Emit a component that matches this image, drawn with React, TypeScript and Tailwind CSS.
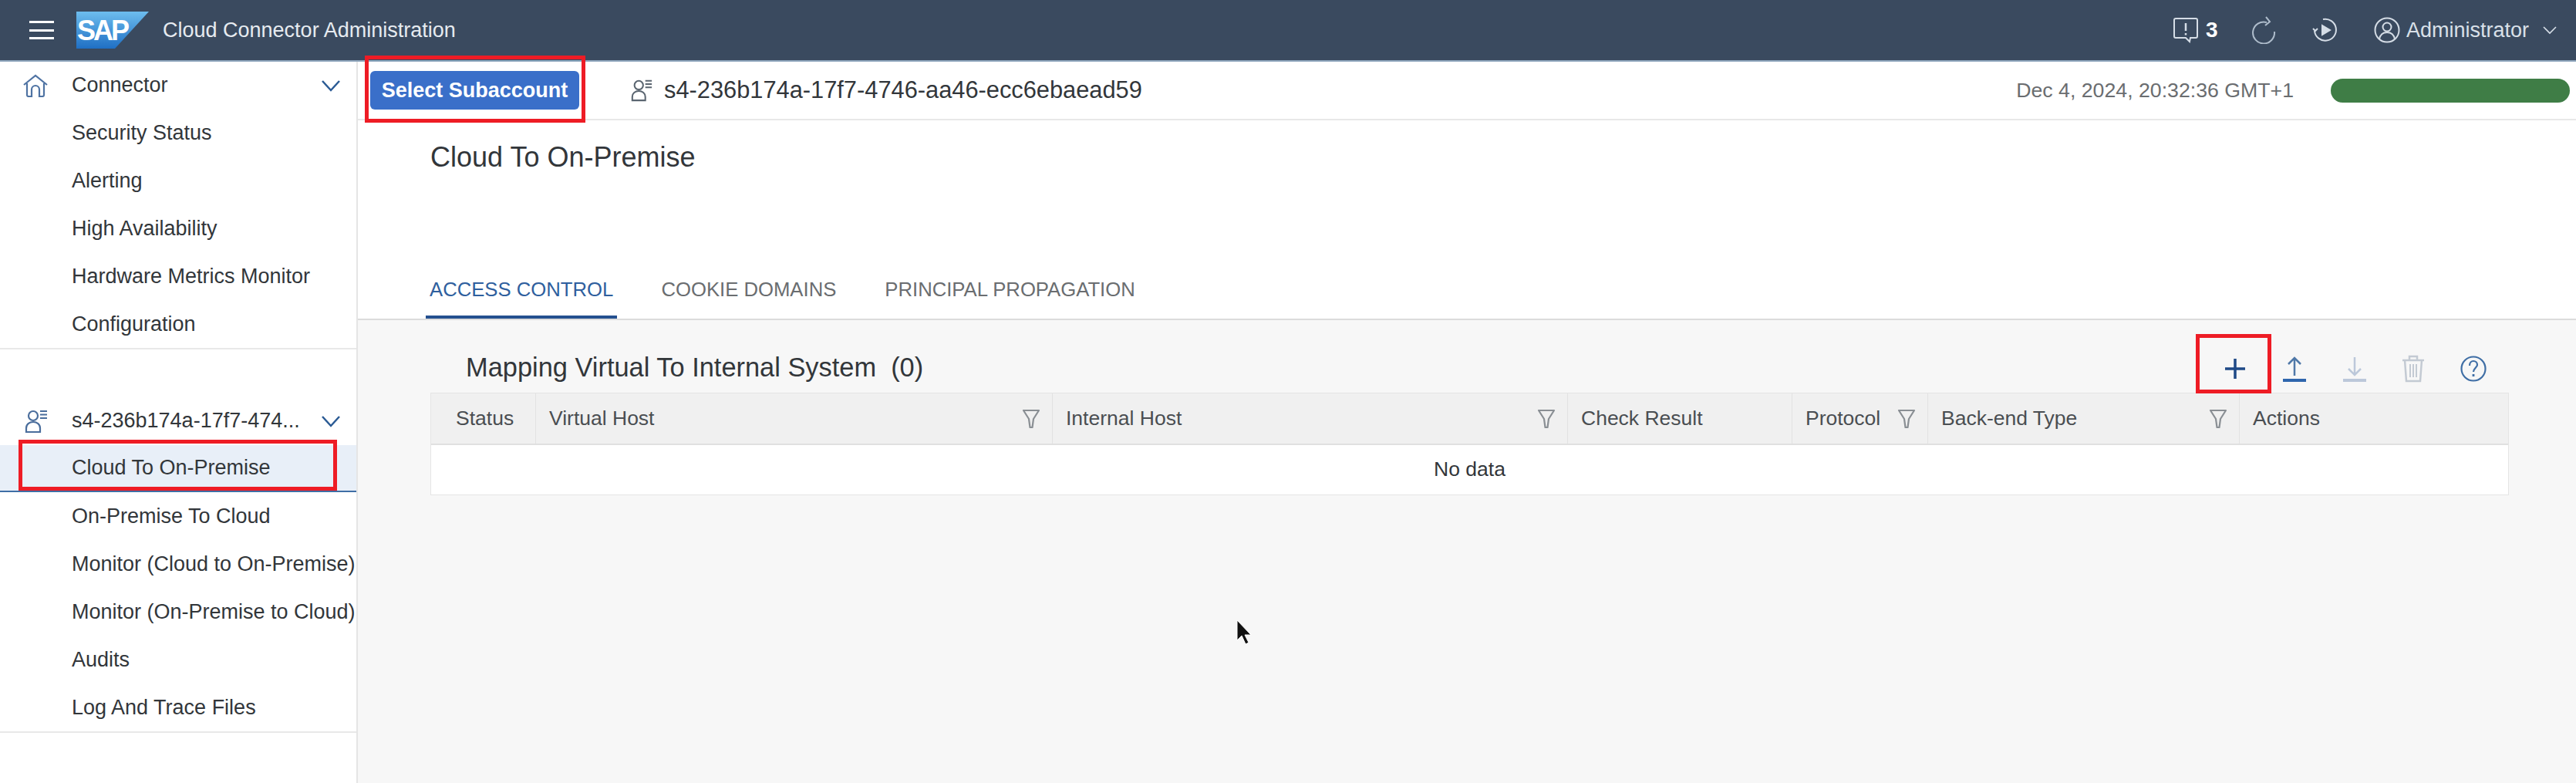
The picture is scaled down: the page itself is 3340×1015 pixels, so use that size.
const connectorItems = ["Security Status", "Alerting", "High Availability", "Hardware Metrics Monitor", "Configuration"];
const accountItems = ["On-Premise To Cloud", "Monitor (Cloud to On-Premise)", "Monitor (On-Premise to Cloud)", "Audits", "Log And Trace Files"];

const columns = [
  { label: "Status", filter: false },
  { label: "Virtual Host", filter: true },
  { label: "Internal Host", filter: true },
  { label: "Check Result", filter: false },
  { label: "Protocol", filter: true },
  { label: "Back-end Type", filter: true },
  { label: "Actions", filter: false },
];

function FilterIcon() {
  return (
    <svg width="24" height="28" viewBox="0 0 24 28" fill="none" stroke="#8a8f94" strokeWidth="2.200" className="shrink-0">
      <path d="M2 3h20l-7 11-1.500 11h-3L9 14z" strokeLinejoin="round" />
    </svg>
  );
}

function PersonListIcon({ color, size }: { color: string; size: number }) {
  return (
    <svg width={size} height={size} viewBox="0 0 32 32" fill="none" stroke={color} strokeWidth="2.200">
      <circle cx="12" cy="9" r="6" />
      <path d="M3 30v-5c0-5 4-8 9-8s9 3 9 8v5z" />
      <path d="M21 3h9M21 7.500h9M21 12h9" />
    </svg>
  );
}

function HomeIcon() {
  return (
    <svg width="32" height="30" viewBox="0 0 32 30" fill="none" stroke="#4f73a3" strokeWidth="2.200" className="ml-[30px] shrink-0">
      <path d="M1 14L16 2l15 12" />
      <path d="M5 12v15a2 2 0 0 0 2 2h4V20a5 5 0 0 1 10 0v9h4a2 2 0 0 0 2-2V12" />
    </svg>
  );
}

function NavChevron() {
  return (
    <svg width="26" height="16" viewBox="0 0 26 16" fill="none" stroke="#2a5a94" strokeWidth="2.500" className="mr-[20px] ml-auto shrink-0">
      <path d="M2 2l11 12L24 2" />
    </svg>
  );
}

function SapLogo() {
  return (
    <svg width="94" height="48" viewBox="0 0 94 48" className="shrink-0">
      <defs>
        <linearGradient id="sapBlue" x1="0" y1="0" x2="0" y2="1">
          <stop offset="0" stopColor="#6dbdee" />
          <stop offset="1" stopColor="#1f6fc4" />
        </linearGradient>
      </defs>
      <polygon points="0,0 94,0 50,48 0,48" fill="url(#sapBlue)" />
      <text x="1" y="37" fill="#ffffff" fontFamily="Liberation Sans, sans-serif" fontWeight="700" fontSize="36" letterSpacing="-3">
        SAP
      </text>
    </svg>
  );
}

export default function App() {
  return (
    <div className="flex h-[1015px] w-[3340px] flex-col overflow-hidden bg-white font-['Liberation_Sans',sans-serif] text-[27px] text-[#32363a]">
      <header className="flex h-[80px] shrink-0 items-center border-b-2 border-[#8fa6bd] bg-[#3a4a5f] text-[#e6ebf0]">
        <div className="ml-[38px] flex h-[24px] w-[32px] flex-col justify-between">
          <span className="h-[3px] bg-white" />
          <span className="h-[3px] bg-white" />
          <span className="h-[3px] bg-white" />
        </div>
        <div className="ml-[29px]">
          <SapLogo />
        </div>
        <span className="ml-[18px]">Cloud Connector Administration</span>
        <div className="ml-auto flex items-center">
          <svg width="34" height="34" viewBox="0 0 34 34" fill="none" stroke="#d5dde6" strokeWidth="2">
            <path d="M4 2h26a2 2 0 0 1 2 2v21a2 2 0 0 1-2 2h-7l-1 5-5-5H4a2 2 0 0 1-2-2V4a2 2 0 0 1 2-2z" />
            <path d="M17 8v10M17 21v2.500" strokeWidth="2.500" />
          </svg>
          <span className="ml-[9px] w-[16px] text-[28px] font-bold text-white">3</span>
          <svg className="ml-[42px]" width="34" height="36" viewBox="0 0 34 36" fill="none" stroke="#aebccb" strokeWidth="2">
            <path d="M21 8A14 14 0 1 0 31 20" />
            <path d="M20 1l5 6-6 5" />
          </svg>
          <svg className="ml-[46px]" width="34" height="34" viewBox="0 0 34 34" fill="none" stroke="#d5dde6" strokeWidth="2">
            <path d="M14 3a14 14 0 1 1-11 15" />
            <path d="M1 15l3 3 3-3" />
            <path d="M13 11l10 6-10 6z" fill="#d5dde6" />
          </svg>
          <svg className="ml-[46px]" width="34" height="36" viewBox="0 0 34 36" fill="none" stroke="#d5dde6" strokeWidth="2">
            <circle cx="17" cy="18" r="15.500" />
            <circle cx="17" cy="14" r="5.500" />
            <path d="M7 30c1-6 5-9 10-9s9 3 10 9" />
          </svg>
          <span className="ml-[8px] text-[#d9e0e8]">Administrator</span>
          <svg className="mr-[25px] ml-[18px]" width="18" height="11" viewBox="0 0 18 11" fill="none" stroke="#d5dde6" strokeWidth="1.600">
            <path d="M1 1l8 8 8-8" />
          </svg>
        </div>
      </header>

      <div className="flex min-h-0 flex-1">
        <aside className="w-[464px] shrink-0 border-r-2 border-[#e5e5e5] bg-white">
          <div className="flex h-[61px] items-center">
            <HomeIcon />
            <span className="ml-[31px]">Connector</span>
            <NavChevron />
          </div>
          {connectorItems.map((item) => (
            <div key={item} className="flex h-[62px] items-center pl-[93px]">
              {item}
            </div>
          ))}
          <div className="h-[63px] border-t-2 border-[#e8e8e8]" />
          <div className="flex h-[63px] items-center">
            <span className="ml-[31px] w-[32px]">
              <PersonListIcon color="#4a6d9c" size={32} />
            </span>
            <span className="ml-[30px] whitespace-nowrap">s4-236b174a-17f7-474...</span>
            <NavChevron />
          </div>
          <div className="relative flex h-[61px] items-center border-b-2 border-[#3f6ea5] bg-[#e8eff8] pl-[93px]">
            Cloud To On-Premise
            <div className="absolute top-[-7px] left-[24px] h-[66px] w-[413px] border-[5px] border-[#ee1c25]" />
          </div>
          {accountItems.map((item) => (
            <div key={item} className="flex h-[62px] items-center whitespace-nowrap pl-[93px]">
              {item}
            </div>
          ))}
          <div className="border-t-2 border-[#e8e8e8]" />
        </aside>

        <main className="flex min-w-0 flex-1 flex-col">
          <div className="flex h-[76px] shrink-0 items-center border-b-2 border-[#e8e8e8] pl-[16px]">
            <div className="relative">
              <button className="flex h-[50px] w-[271px] items-center justify-center rounded-[6px] bg-[#3a6fc9] text-[27px] font-bold text-white">
                Select Subaccount
              </button>
              <div className="absolute top-[-20px] left-[-7px] h-[87px] w-[286px] border-[5px] border-[#ee1c25]" />
            </div>
            <span className="ml-[66px]">
              <PersonListIcon color="#5a6570" size={30} />
            </span>
            <span className="ml-[14px] text-[30.800px]">s4-236b174a-17f7-4746-aa46-ecc6ebaead59</span>
            <span className="ml-auto text-[26.700px] text-[#6a6d70]">Dec 4, 2024, 20:32:36 GMT+1</span>
            <span className="mr-[8px] ml-[48px] h-[31px] w-[310px] rounded-full bg-[#3f7d46]" />
          </div>

          <div className="flex h-[259px] shrink-0 flex-col bg-white">
            <h1 className="mt-[26px] ml-[94px] text-[36px] leading-[44px]">Cloud To On-Premise</h1>
            <div className="mt-auto flex h-[80px] items-stretch border-b-2 border-[#dcdcdc] pl-[88px] text-[25.700px] text-[#6a6d70]">
              <div className="flex items-center border-b-4 border-[#24508f] px-[5px] pt-[6px] text-[#2f5f9e]">ACCESS CONTROL</div>
              <div className="ml-[57px] flex items-center pt-[2px]">COOKIE DOMAINS</div>
              <div className="ml-[63px] flex items-center pt-[2px]">PRINCIPAL PROPAGATION</div>
            </div>
          </div>

          <section className="relative flex-1 bg-[#f7f7f7] pr-[87px] pl-[94px]">
            <div className="flex h-[94px] items-end pb-[13px]">
              <h2 className="ml-[46px] text-[34.400px] leading-[40px]">Mapping Virtual To Internal System&nbsp;&nbsp;(0)</h2>
              <div className="ml-auto flex items-center">
                <div className="relative">
                  <svg width="32" height="32" viewBox="0 0 32 32" fill="none" stroke="#1f4a87" strokeWidth="3.500">
                    <path d="M16 3v26M3 16h26" />
                  </svg>
                  <div className="absolute top-[-29px] left-[-35px] h-[77px] w-[98px] border-[5px] border-[#ee1c25]" />
                </div>
                <svg className="ml-[45px]" width="32" height="34" viewBox="0 0 32 34" fill="none" stroke="#4f78a8" strokeWidth="2.500">
                  <path d="M16 26V3M8 11l8-8 8 8" />
                  <path d="M1 32h30" stroke="#2f66ad" strokeWidth="4" />
                </svg>
                <svg className="ml-[46px]" width="32" height="34" viewBox="0 0 32 34" fill="none" stroke="#bcc8da" strokeWidth="2.500">
                  <path d="M16 2v23M8 17l8 8 8-8" />
                  <path d="M1 32h30" strokeWidth="4" />
                </svg>
                <svg className="ml-[45px]" width="30" height="36" viewBox="0 0 30 36" fill="none" stroke="#c3cad3" strokeWidth="2.500">
                  <path d="M1 7h28M10 7V2h10v5M4 7l2 27h18l2-27" />
                  <path d="M11 12v17M15 12v17M19 12v17" strokeWidth="2" />
                </svg>
                <svg className="ml-[46px] mr-[29px]" width="34" height="36" viewBox="0 0 34 36" fill="none" stroke="#3f6ea5" strokeWidth="2.200">
                  <circle cx="17" cy="18" r="15.500" />
                  <path d="M12 14c0-4 2.500-6 5-6s5 2 5 5-5 5-5 9" />
                  <path d="M17 25v3" strokeWidth="2.800" />
                </svg>
              </div>
            </div>

            <div className="border border-[#e5e5e5] bg-white text-[#32363a]">
              <div className="grid h-[67px] grid-cols-[136px_670px_668px_291px_176px_404px_1fr] border-b-2 border-[#e0e0e0] bg-[#f0f0f0]">
                {columns.map((col, i) => (
                  <div key={col.label} className={`flex items-center justify-between border-r border-[#e2e2e2] text-[26.500px] text-[#4a4e52] ${i === 0 ? "pl-[32px]" : "pl-[17px]"} ${i === 6 ? "border-r-0" : ""} pr-[15px]`}>
                    <span>{col.label}</span>
                    {col.filter && <FilterIcon />}
                  </div>
                ))}
              </div>
              <div className="flex h-[64px] items-center justify-center text-[26.500px]">No data</div>
            </div>

            <svg className="absolute top-[388px] left-[1138px]" width="24" height="34" viewBox="0 0 24 34">
              <path d="M2 1v26l6-6 5 11 4-2-5-10h8z" fill="#111111" stroke="#ffffff" strokeWidth="1" />
            </svg>
          </section>
        </main>
      </div>
    </div>
  );
}
